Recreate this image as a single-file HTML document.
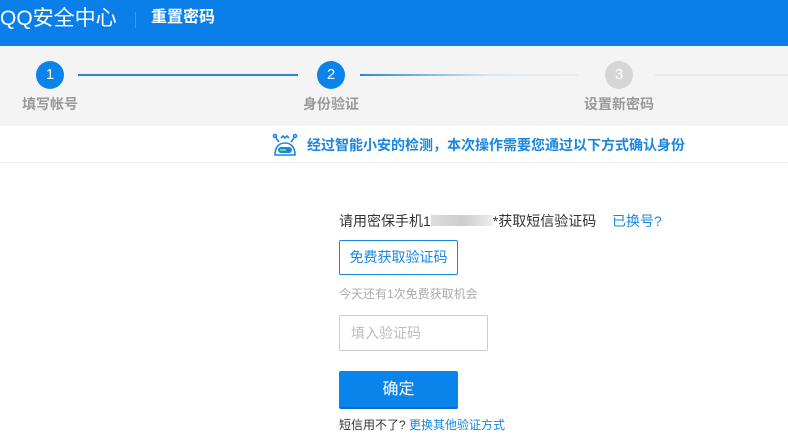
<!DOCTYPE html>
<html><head><meta charset="utf-8"><style>
*{margin:0;padding:0;box-sizing:border-box}
body{width:788px;height:440px;overflow:hidden;background:#fff;font-family:"Liberation Sans","Noto Sans CJK SC",sans-serif;position:relative;color:#333}
.a{position:absolute;white-space:nowrap}
.hd{left:0;top:0;width:788px;height:46px;background:#0a7ee9}
.c{position:absolute;width:28px;height:28px;border-radius:50%;color:#fff;font-size:15px;text-align:center;line-height:28px}
.lbl{font-size:14px;color:#999;font-weight:bold}
</style></head><body>
<div class="a hd"></div>
<div class="a" style="left:0;top:5px;font-size:21px;color:#fff;line-height:28px">QQ安全中心</div>
<div class="a" style="left:135px;top:12px;width:1px;height:16px;background:#3d9af0"></div>
<div class="a" style="left:151px;top:7px;font-size:16px;color:#fff;font-weight:bold;line-height:22px">重置密码</div>
<div class="a" style="left:0;top:46px;width:788px;height:80px;background:#f4f4f4"></div>
<div class="c" style="left:36px;top:61px;background:#0a84ea">1</div>
<div class="a" style="left:78px;top:74px;width:220px;height:2px;background:#2a86d8"></div>
<div class="c" style="left:317px;top:61px;background:#0a84ea">2</div>
<div class="a" style="left:360px;top:74px;width:218px;height:2px;background:linear-gradient(90deg,#2a86d8,#d8e8f4 60%,#ececec)"></div>
<div class="c" style="left:605px;top:61px;background:#d6d6d6">3</div>
<div class="a" style="left:655px;top:74px;width:133px;height:2px;background:#e8e8e8"></div>
<div class="a lbl" style="left:22px;top:94px">填写帐号</div>
<div class="a lbl" style="left:303px;top:94px">身份验证</div>
<div class="a lbl" style="left:584px;top:94px">设置新密码</div>
<div class="a" style="left:0;top:162px;width:788px;height:1px;background:#ececec"></div>
<svg class="a" style="left:271px;top:133px" width="28" height="26" viewBox="0 0 28 26"><g fill="none" stroke="#1a86e0" stroke-width="1.6"><circle cx="4" cy="3" r="1.5"/><circle cx="24" cy="3" r="1.5"/><path d="M10 5l2-2 2 2 2-2 2 2"/><path d="M5 5l3 4M23 5l-3 4"/><path d="M4 22C4 14 8 10 14 10s10 4 10 12z"/></g><rect x="7" y="14" width="14" height="6" rx="3" fill="#1a86e0"/><rect x="9" y="16" width="6" height="2" fill="#7ed36a"/></svg>
<div class="a" style="left:307px;top:135px;font-size:14px;font-weight:bold;color:#1a86e0">经过智能小安的检测，本次操作需要您通过以下方式确认身份</div>
<div class="a" style="left:339px;top:211px;font-size:14px;color:#333">请用密保手机1<span style="display:inline-block;width:62px;height:11px;background:linear-gradient(90deg,#ddd,#ccc,#eee)"></span>*获取短信验证码</div>
<div class="a" style="left:612px;top:211px;font-size:14px;color:#1a86e0">已换号?</div>
<div class="a" style="left:339px;top:240px;width:119px;height:35px;border:1px solid #1a86e0;border-radius:2px;color:#1a86e0;font-size:14px;text-align:center;line-height:33px">免费获取验证码</div>
<div class="a" style="left:339px;top:285px;font-size:12px;color:#aaa">今天还有1次免费获取机会</div>
<div class="a" style="left:339px;top:315px;width:149px;height:36px;border:1px solid #ccc;border-radius:2px;color:#bbb;font-size:14px;padding-left:11px;line-height:34px">填入验证码</div>
<div class="a" style="left:339px;top:371px;width:119px;height:38px;background:#0a84ea;border-radius:2px;color:#fff;font-size:16px;text-align:center;line-height:38px;border-bottom:2px solid #0a6cc2">确定</div>
<div class="a" style="left:339px;top:416px;font-size:12px;color:#333">短信用不了? <span style="color:#1a86e0">更换其他验证方式</span></div>
</body></html>
